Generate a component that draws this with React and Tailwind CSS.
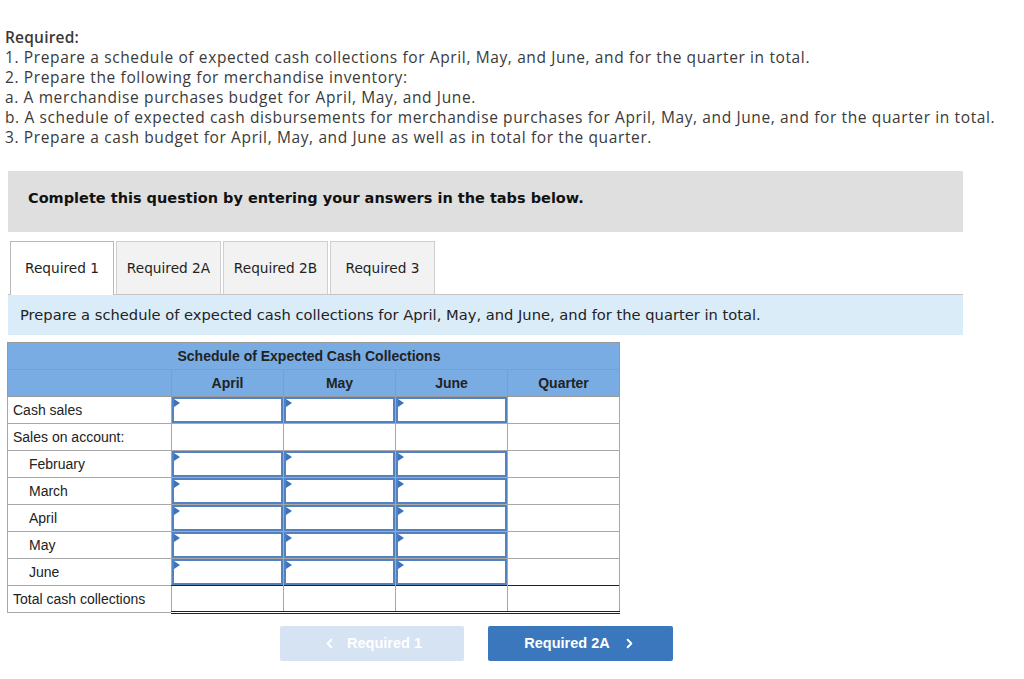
import React from 'react';
import { ChevronLeft, ChevronRight } from 'lucide-react';

const months = ['April', 'May', 'June'];

const rows = [
  { label: 'Cash sales', inputs: true },
  { label: 'Sales on account:', inputs: false },
  { label: 'February', inputs: true, indent: true },
  { label: 'March', inputs: true, indent: true },
  { label: 'April', inputs: true, indent: true },
  { label: 'May', inputs: true, indent: true },
  { label: 'June', inputs: true, indent: true },
];

const InputCell = () => (
  <td className="border border-[#a8a8a8] p-0 h-[27px]">
    <div className="relative h-[26px] border-2 border-[#5282c0] bg-white">
      <span className="absolute left-0 top-0 w-0 h-0 border-t-[4px] border-b-[4px] border-l-[6px] border-t-transparent border-b-transparent border-l-[#3a73c2]" />
    </div>
  </td>
);

const PlainCell = ({ className = '' }) => (
  <td className={`border border-[#a8a8a8] p-0 h-[27px] ${className}`} />
);

const Required = () => {
  return (
    <div className="w-[1024px] h-[679px] bg-white text-[#333] overflow-hidden">
      <div className="pl-[5px] pt-[27px] text-[15.5px] leading-[20px] tracking-[0.62px] font-['Open_Sans',sans-serif] text-[#3a3a3a]">
        <div className="font-semibold tracking-[0.2px]">Required:</div>
        <div>1. Prepare a schedule of expected cash collections for April, May, and June, and for the quarter in total.</div>
        <div>2. Prepare the following for merchandise inventory:</div>
        <div>a. A merchandise purchases budget for April, May, and June.</div>
        <div>b. A schedule of expected cash disbursements for merchandise purchases for April, May, and June, and for the quarter in total.</div>
        <div>3. Prepare a cash budget for April, May, and June as well as in total for the quarter.</div>
      </div>

      <div className="ml-[8px] mt-[24px] w-[955px] h-[61px] bg-[#dfdfdf] flex items-center pl-[20px] pb-[6px] font-['DejaVu_Sans',sans-serif] font-bold text-[14.5px] text-[#111]">
        Complete this question by entering your answers in the tabs below.
      </div>

      <div className="ml-[10px] mt-[9px] flex gap-[2px] items-end font-['DejaVu_Sans',sans-serif] text-[13.7px] text-[#222]">
        <div className="w-[104px] h-[54px] bg-white border border-b-0 border-[#b9b9b9] flex items-center justify-center relative z-10 -mb-px">
          Required 1
        </div>
        {['Required 2A', 'Required 2B', 'Required 3'].map((t) => (
          <div key={t} className="w-[105px] h-[53px] bg-[#f2f2f2] border border-b-0 border-[#cfcfcf] flex items-center justify-center">
            {t}
          </div>
        ))}
      </div>

      <div className="ml-[8px] w-[955px] h-[41px] border-t border-[#c4c4c4] bg-[#dbecf9] flex items-center pl-[12px] font-['DejaVu_Sans',sans-serif] text-[14.7px] text-[#222]">
        Prepare a schedule of expected cash collections for April, May, and June, and for the quarter in total.
      </div>

      <table className="ml-[7px] mt-[7px] border-collapse border border-[#999] font-['Liberation_Sans',sans-serif] text-[14px] text-[#222]">
        <colgroup>
          <col className="w-[164px]" />
          <col className="w-[112px]" />
          <col className="w-[112px]" />
          <col className="w-[112px]" />
          <col className="w-[112px]" />
        </colgroup>
        <thead>
          <tr className="bg-[#79ace3]">
            <th className="border-b border-[#999] h-[27px] p-0" />
            <th colSpan={4} className="text-left pl-[6px] font-bold text-[14px] text-[#222] border-b border-[#999] h-[27px] p-0">
              Schedule of Expected Cash Collections
            </th>
          </tr>
          <tr className="bg-[#79ace3]">
            <th className="border border-[#999] h-[27px] p-0" />
            {[...months, 'Quarter'].map((m) => (
              <th key={m} className="border border-[#999] font-bold text-center h-[27px] p-0">
                {m}
              </th>
            ))}
          </tr>
        </thead>
        <tbody>
          {rows.map((r) => (
            <tr key={r.label}>
              <td className={`border border-[#a8a8a8] h-[27px] p-0 ${r.indent ? 'pl-[21px]' : 'pl-[5px]'}`}>{r.label}</td>
              {months.map((m) =>
                r.inputs ? <InputCell key={m} /> : <PlainCell key={m} />
              )}
              <PlainCell />
            </tr>
          ))}
          <tr>
            <td className="border border-[#a8a8a8] h-[27px] p-0 pl-[5px]">Total cash collections</td>
            {[0, 1, 2, 3].map((i) => (
              <td key={i} className="border border-[#a8a8a8] border-t-[#222] border-b-[3px] border-b-[#222] border-double h-[27px] p-0" />
            ))}
          </tr>
        </tbody>
      </table>

      <div className="flex gap-[24px] ml-[280px] mt-[12px] font-['Liberation_Sans',sans-serif] font-bold text-[14.5px]">
        <button className="w-[184px] h-[35px] rounded-[2px] bg-[#d6e3f2] text-white flex items-center justify-center gap-[10px]">
          <ChevronLeft size={15} strokeWidth={3} />
          <span>Required 1</span>
        </button>
        <button className="w-[185px] h-[35px] rounded-[2px] bg-[#3a77bc] text-white flex items-center justify-center gap-[12px]">
          <span>Required 2A</span>
          <ChevronRight size={15} strokeWidth={3} />
        </button>
      </div>
    </div>
  );
};

export default Required;
